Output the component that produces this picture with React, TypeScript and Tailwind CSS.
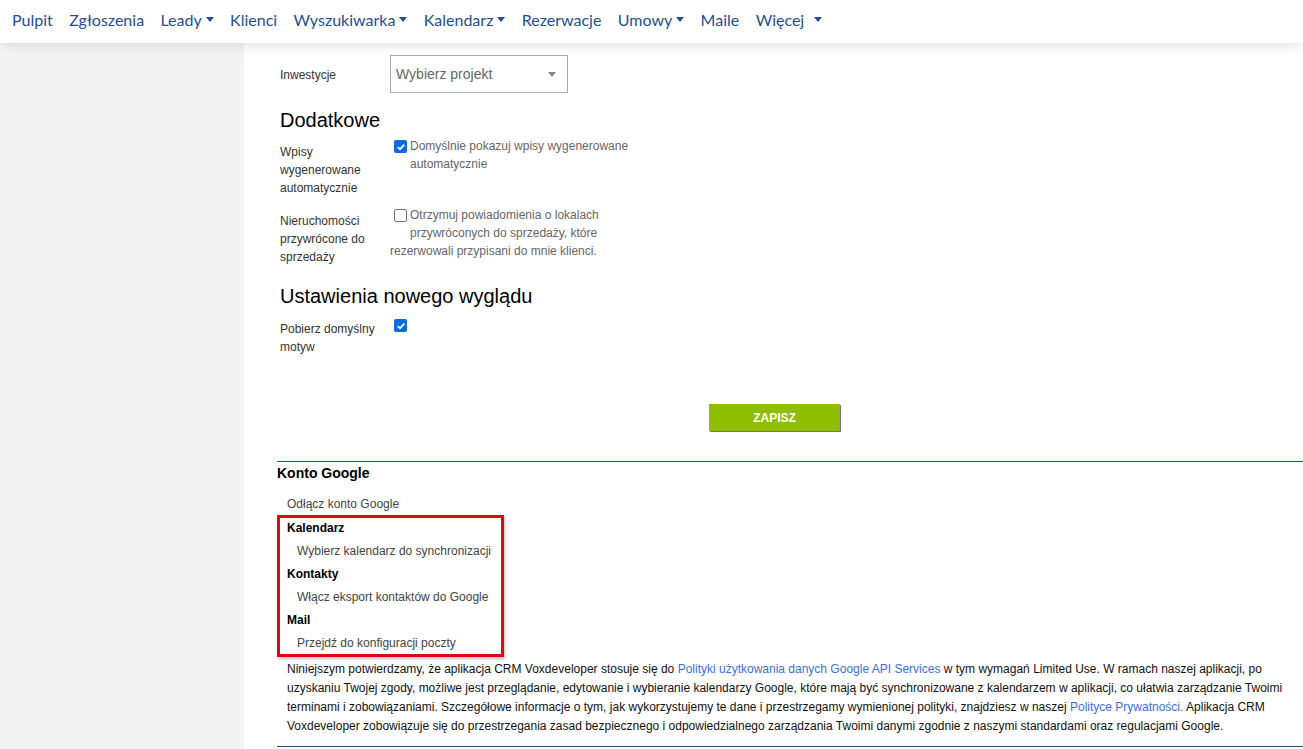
import React from "react";

const navItems: { label: string; caret?: boolean; wide?: boolean }[] = [
  { label: "Pulpit" },
  { label: "Zgłoszenia" },
  { label: "Leady", caret: true },
  { label: "Klienci" },
  { label: "Wyszukiwarka", caret: true },
  { label: "Kalendarz", caret: true },
  { label: "Rezerwacje" },
  { label: "Umowy", caret: true },
  { label: "Maile" },
  { label: "Więcej", caret: true, wide: true },
];

function Caret({ wide }: { wide?: boolean }) {
  return (
    <span
      className={`inline-block h-0 w-0 border-x-[4px] border-t-[5px] border-x-transparent border-t-[#1e4f96] align-middle ${
        wide ? "ml-[10px]" : "ml-[4px]"
      }`}
    />
  );
}

function Checkbox({ checked }: { checked?: boolean }) {
  if (checked) {
    return (
      <span className="inline-flex h-[13px] w-[13px] items-center justify-center rounded-[2px] bg-[#0b6bdf]">
        <svg width="10" height="10" viewBox="0 0 10 10">
          <path d="M1.8 5.2 L4 7.3 L8.3 2.6" fill="none" stroke="white" strokeWidth="1.7" />
        </svg>
      </span>
    );
  }
  return <span className="inline-block h-[13px] w-[13px] rounded-[2px] border border-[#767676] bg-white" />;
}

function Row({ label, children }: { label: React.ReactNode; children: React.ReactNode }) {
  return (
    <div className="flex">
      <div className="w-[110px] shrink-0 pt-[6px] text-[12px] leading-[18px] text-[#333]">{label}</div>
      <div className="min-w-0">{children}</div>
    </div>
  );
}

export default function App() {
  return (
    <div className="min-h-[749px] bg-[#f4f4f4] font-['Liberation_Sans',Arial,sans-serif]">
      <nav className="relative z-10 flex h-[43px] items-center bg-white px-[3.8px] pb-[4px] shadow-[0_2px_14px_rgba(0,0,0,0.12)] font-['Lato',sans-serif] text-[16px] text-[#1e4f96]">
        {navItems.map((item) => (
          <span key={item.label} className="flex items-center px-[8.2px]">
            {item.label}
            {item.caret && <Caret wide={item.wide} />}
          </span>
        ))}
      </nav>

      <div className="flex">
        <aside className="w-[244px] shrink-0" />
        <main className="min-h-[706px] flex-1 bg-white pl-[33px]">
          <div className="pl-[3px] pt-[12px]">
            <div className="flex">
              <div className="w-[110px] shrink-0 pt-[11px] text-[12px] leading-[18px] text-[#333]">Inwestycje</div>
              <div className="flex h-[38px] w-[178px] items-center justify-between border border-[#aaa] pl-[5px] pr-[11px] text-[14px] text-[#666]">
                <span>Wybierz projekt</span>
                <span className="h-0 w-0 border-x-[4px] border-t-[5px] border-x-transparent border-t-[#888]" />
              </div>
            </div>

            <h2 className="mt-[15px] text-[20px] leading-[24px] text-black">Dodatkowe</h2>

            <div className="mt-[5px]">
              <Row
                label={
                  <>
                    Wpisy
                    <br />
                    wygenerowane
                    <br />
                    automatycznie
                  </>
                }
              >
                <div className="w-[250px] text-[12px] leading-[18px] text-[#666]">
                  <span className="float-left mb-[8px] ml-[4px] mr-[3px] mt-[3px] flex">
                    <Checkbox checked />
                  </span>
                  Domyślnie pokazuj wpisy wygenerowane automatycznie
                </div>
              </Row>
            </div>

            <div className="mt-[9px]">
              <Row
                label={
                  <>
                    Nieruchomości
                    <br />
                    przywrócone do
                    <br />
                    sprzedaży
                  </>
                }
              >
                <div className="w-[250px] text-[12px] leading-[18px] text-[#666]">
                  <span className="float-left mb-[8px] ml-[4px] mr-[3px] mt-[3px] flex">
                    <Checkbox />
                  </span>
                  Otrzymuj powiadomienia o lokalach przywróconych do sprzedaży, które rezerwowali przypisani do mnie
                  klienci.
                </div>
              </Row>
            </div>

            <h2 className="mt-[18px] text-[20px] leading-[24px] text-black">Ustawienia nowego wyglądu</h2>

            <div className="mt-[6px]">
              <Row
                label={
                  <>
                    Pobierz domyślny
                    <br />
                    motyw
                  </>
                }
              >
                <span className="ml-[4px] mt-[5px] flex">
                  <Checkbox checked />
                </span>
              </Row>
            </div>
          </div>

          <div className="mt-[48px] flex justify-center">
            <button className="ml-[-31px] h-[27px] w-[131px] bg-[#8fbe00] text-[12px] font-bold text-white shadow-[1px_1px_0_#777]">
              ZAPISZ
            </button>
          </div>

          <section className="mt-[30px]">
            <div className="h-px bg-[#0b5ab0]" />
            <h3 className="mt-[1px] text-[14px] font-bold leading-[20px] text-black">Konto Google</h3>
            <div className="mt-[13px] pl-[10px] text-[12px] leading-[16px] text-[#444]">Odłącz konto Google</div>

            <div className="mt-[3px] w-[227px] border-[3px] border-[#e2060d] pb-[3px] pl-[7px] pt-[2px] text-[12px] leading-[16px] shadow-[1px_2px_3px_rgba(0,0,0,0.25)]">
              <div className="font-bold text-black">Kalendarz</div>
              <div className="mt-[7px] pl-[10px] text-[#444]">Wybierz kalendarz do synchronizacji</div>
              <div className="mt-[7px] font-bold text-black">Kontakty</div>
              <div className="mt-[7px] pl-[10px] text-[#444]">Włącz eksport kontaktów do Google</div>
              <div className="mt-[7px] font-bold text-black">Mail</div>
              <div className="mt-[7px] pl-[10px] text-[#444]">Przejdź do konfiguracji poczty</div>
            </div>

            <p className="mt-[3px] pl-[10px] pr-[10px] text-[12px] leading-[19px] text-[#111]">
              Niniejszym potwierdzamy, że aplikacja CRM Voxdeveloper stosuje się do{" "}
              <span className="text-[#3b6fe0]">Polityki użytkowania danych Google API Services</span> w tym wymagań
              Limited Use. W ramach naszej aplikacji, po uzyskaniu Twojej zgody, możliwe jest przeglądanie, edytowanie i
              wybieranie kalendarzy Google, które mają być synchronizowane z kalendarzem w aplikacji, co ułatwia
              zarządzanie Twoimi terminami i zobowiązaniami. Szczegółowe informacje o tym, jak wykorzystujemy te dane i
              przestrzegamy wymienionej polityki, znajdziesz w naszej{" "}
              <span className="text-[#3b6fe0]">Polityce Prywatności.</span> Aplikacja CRM Voxdeveloper zobowiązuje się
              do przestrzegania zasad bezpiecznego i odpowiedzialnego zarządzania Twoimi danymi zgodnie z naszymi
              standardami oraz regulacjami Google.
            </p>
            <div className="mt-[10px] h-px bg-[#1b4f86]" />
          </section>
        </main>
      </div>
    </div>
  );
}
